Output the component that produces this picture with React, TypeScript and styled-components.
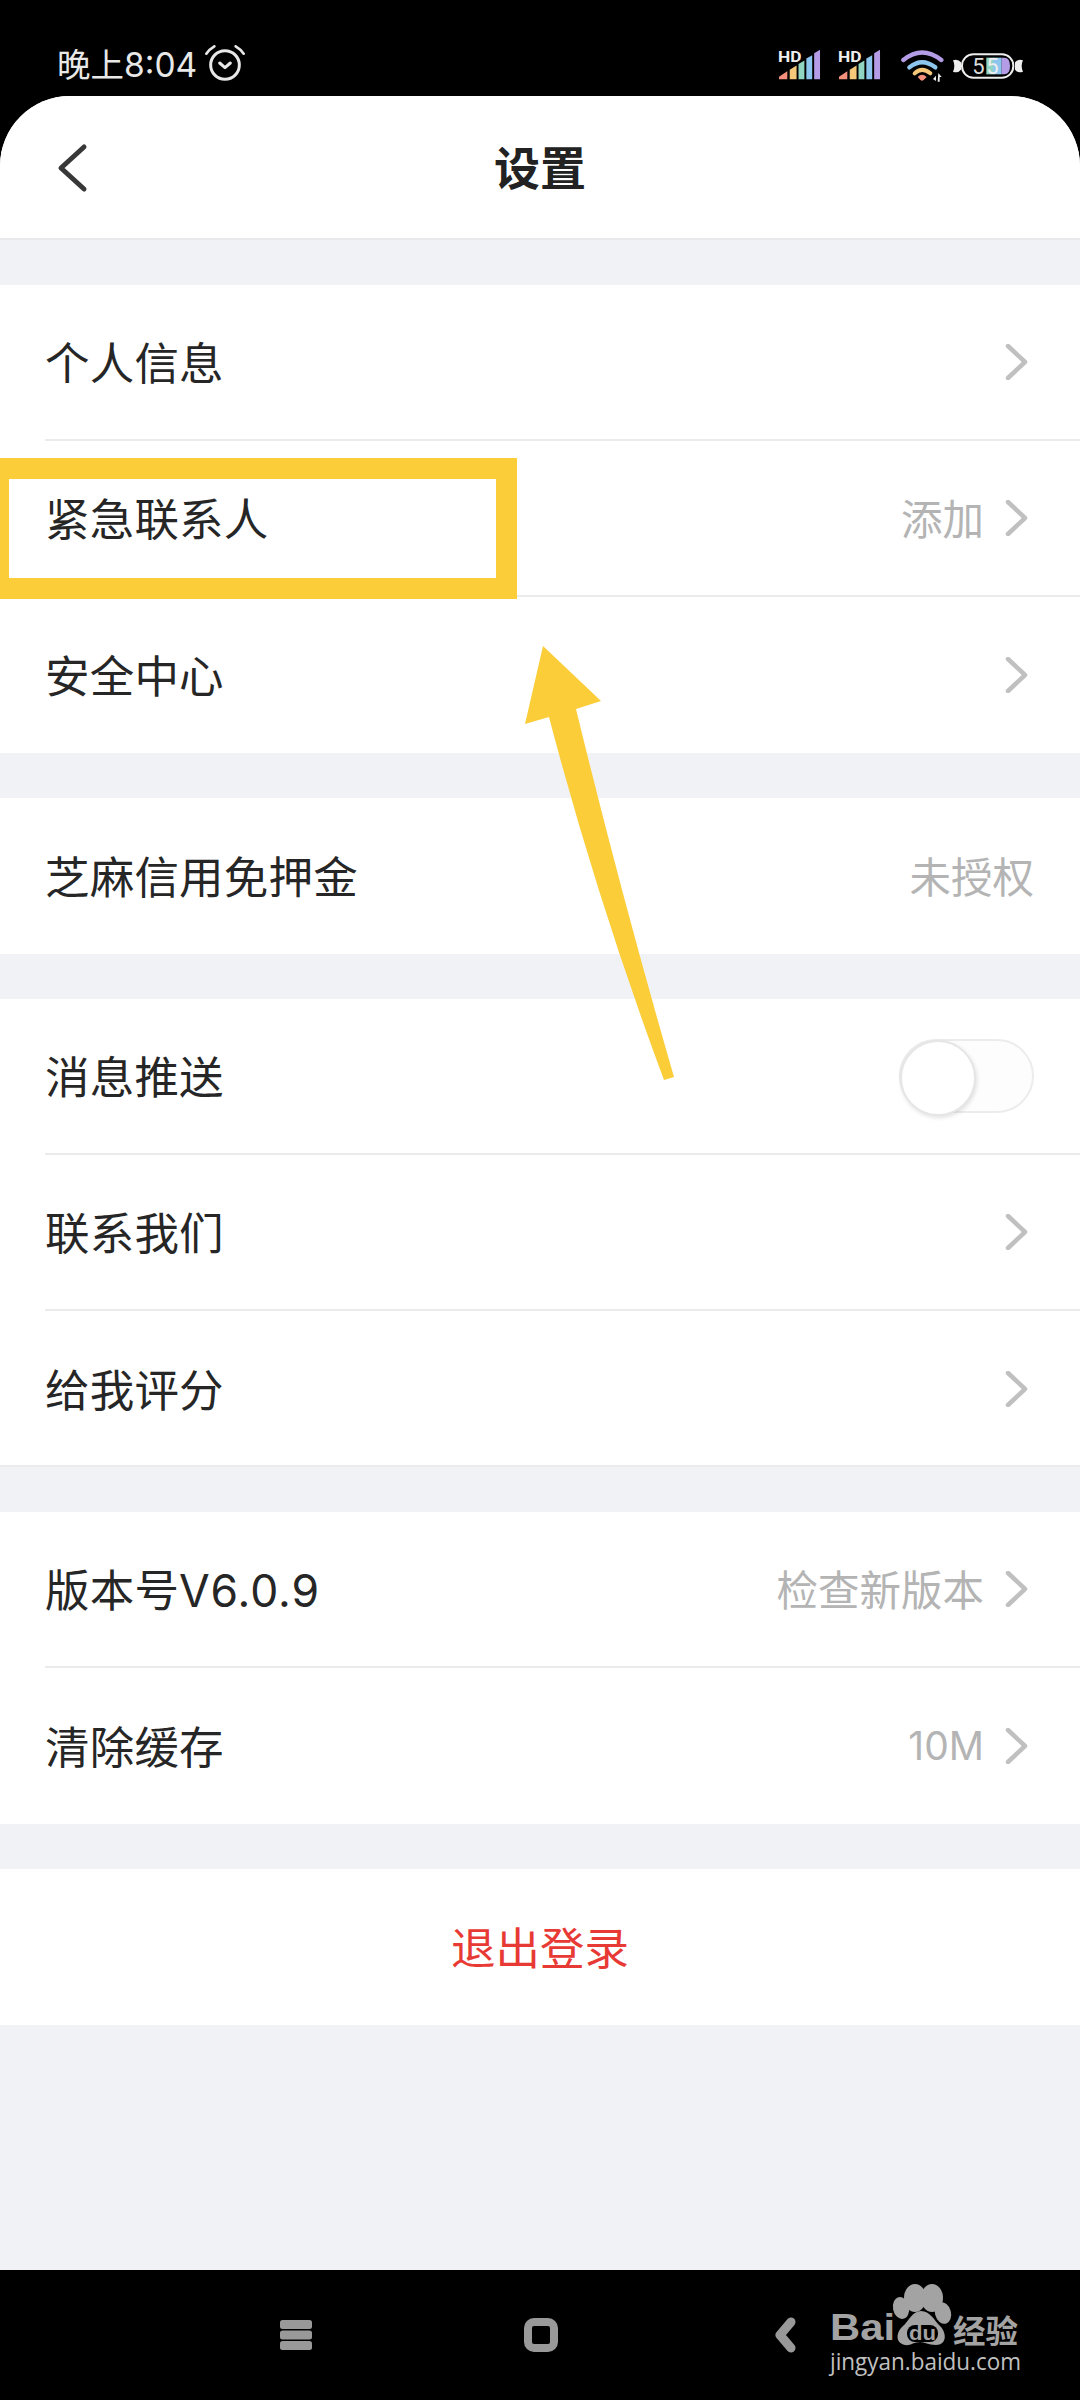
import React from "react";
import styled, { createGlobalStyle } from "styled-components";

const Global = createGlobalStyle`
  html, body { margin: 0; padding: 0; background: #000; }
  body { font-family: Inter, "Noto Sans CJK SC", sans-serif; }
`;

const Screen = styled.div`
  position: relative;
  width: 1080px;
  height: 2400px;
  background: #000;
  display: flex;
  flex-direction: column;
  overflow: hidden;
`;

const StatusBar = styled.div`
  height: 96px;
  box-sizing: border-box;
  display: flex;
  align-items: flex-start;
  justify-content: space-between;
  padding: 46px 57px 0 57px;
`;

const StatusLeft = styled.div`
  display: flex;
  align-items: flex-start;
  gap: 8px;
  margin-top: -1px;
`;

const Time = styled.span`
  color: #e8e8e8;
  font-size: 33.5px;
  line-height: 38px;
  margin-top: 1px;
`;

const StatusRight = styled.div`
  display: flex;
  align-items: flex-start;
`;

const Sheet = styled.main`
  flex: 1;
  background: #f1f2f6;
  border-radius: 70px 70px 0 0;
  overflow: hidden;
  display: flex;
  flex-direction: column;
  gap: 45px;
`;

const Header = styled.header`
  height: 144px;
  box-sizing: border-box;
  background: #fff;
  border-bottom: 2px solid #e9e9ec;
  display: grid;
  grid-template-columns: 1fr auto 1fr;
  align-items: center;
  padding: 2px 56px 0;
`;

const Title = styled.h1`
  margin: 0;
  font-size: 46px;
  font-weight: 700;
  color: #222;
  line-height: 60px;
`;

const Group = styled.section<{ $ruled?: boolean }>`
  background: #fff;
  box-shadow: ${(p) => (p.$ruled ? "inset 0 -2px 0 #ebebeb" : "none")};
`;

const Row = styled.div<{ $last?: boolean }>`
  height: 156px;
  box-sizing: border-box;
  margin-left: 45px;
  padding-right: 46px;
  display: flex;
  align-items: center;
  justify-content: space-between;
  border-bottom: ${(p) => (p.$last ? "none" : "2px solid #ebebeb")};
`;

const Label = styled.span`
  font-size: 44.5px;
  color: #262626;
  letter-spacing: 0.2px;
  margin-bottom: 3px;
`;

const LabelLatin = styled.span`
  letter-spacing: 1px;
`;

const Trailing = styled.div`
  display: flex;
  align-items: center;
  gap: 21px;
`;

const Value = styled.span<{ $latin?: boolean }>`
  font-size: ${(p) => (p.$latin ? "39px" : "41.5px")};
  color: #b4b4b4;
  margin-bottom: 2px;
`;

const ChevronIcon = styled.svg`
  width: 24px;
  height: 36px;
  margin-right: 5px;
  display: block;
`;

const Switch = styled.div`
  position: relative;
  width: 135px;
  height: 74px;
  box-sizing: border-box;
  border: 2px solid #ececec;
  border-radius: 37px;
  background: #fdfdfd;
`;

const Knob = styled.div`
  position: absolute;
  left: -1px;
  top: -1px;
  width: 76px;
  height: 76px;
  box-sizing: border-box;
  border-radius: 50%;
  background: #fff;
  border: 2px solid #e6e6e6;
  box-shadow: 1px 2px 4px rgba(0, 0, 0, 0.12);
`;

const Logout = styled.button`
  display: block;
  width: 100%;
  height: 156px;
  border: 0;
  padding: 0 0 3px;
  background: transparent;
  font: inherit;
  font-size: 44.5px;
  color: #e83a34;
`;

const NavBar = styled.nav`
  height: 130px;
  display: flex;
  align-items: center;
  gap: 211px;
  padding-left: 279px;
`;

const NavIcon = styled.svg`
  width: 34px;
  height: 36px;
  display: block;
`;

const Highlight = styled.div`
  position: absolute;
  left: 0;
  top: 458px;
  width: 517px;
  height: 141px;
  box-sizing: border-box;
  border: 21px solid #fbcd38;
  border-left-width: 9px;
`;

const Overlay = styled.svg`
  position: absolute;
  left: 0;
  top: 0;
  width: 1080px;
  height: 2400px;
  pointer-events: none;
`;

const Watermark = styled.svg`
  position: absolute;
  left: 800px;
  top: 2270px;
  width: 250px;
  height: 120px;
`;

const Signal = ({ ml }: { ml: number }) => (
  <svg width="43" height="34" viewBox="0 -3 44 34" style={{ marginLeft: ml, display: "block" }}>
    <path d="M1 30.5 L1 28 L9.5 22.5 L9.5 30.5 Z" fill="#f4907c" />
    <path d="M12 30.5 L12 21 L19 16.5 L19 30.5 Z" fill="#f5c87a" />
    <path d="M21 30.5 L21 15 L27 11.5 L27 30.5 Z" fill="#8fd5c2" />
    <path d="M29 30.5 L29 9.5 L35 6 L35 30.5 Z" fill="#8cc5ee" />
    <path d="M37 30.5 L37 4 L43 0.5 L43 30.5 Z" fill="#b59ce6" />
    <text x="0" y="12.5" fontFamily="Roboto, sans-serif" fontWeight="700" fontSize="15.5" fill="#eee" textLength="24" lengthAdjust="spacingAndGlyphs">
      HD
    </text>
  </svg>
);

const Wifi = () => (
  <svg width="46" height="33" viewBox="0 0 138 99" style={{ marginLeft: 20, marginTop: 3, display: "block" }}>
    <path d="M7 33 Q63 -12 121 33" fill="none" stroke="#b59ce6" strokeWidth="13" strokeLinecap="round" />
    <path d="M25 55 Q63 24 103 55" fill="none" stroke="#8cc5ee" strokeWidth="13" strokeLinecap="round" />
    <path d="M41 73 Q63 52 88 73" fill="none" stroke="#f5c87a" strokeWidth="12" strokeLinecap="round" />
    <path d="M50 84 Q63 70 77 84 Q63 98 63 95 Q63 98 50 84 Z" fill="#f4907c" />
    <path d="M96 90 L105 80 L105 96 Z" fill="#eee" />
    <path d="M112 72 L122 84 L116 84 L116 98 L110 98 Z" fill="#eee" />
  </svg>
);

const Battery = () => (
  <svg width="70" height="26" viewBox="0 0 210 78" style={{ marginLeft: 6, marginTop: 7, display: "block" }}>
    <path d="M0 22 Q14 16 24 28 L24 50 Q14 62 0 56 Q8 39 0 22 Z" fill="#eee" />
    <path d="M210 22 Q196 16 186 28 L186 50 Q196 62 210 56 Q202 39 210 22 Z" fill="#eee" />
    <rect x="27" y="4" width="154" height="70" rx="34" fill="#000" stroke="#eee" strokeWidth="6" />
    <rect x="100" y="14" width="22" height="50" fill="#8fd5c2" />
    <rect x="120" y="14" width="26" height="50" fill="#8cc5ee" />
    <path d="M146 14 H154 Q171 14 171 39 Q171 64 154 64 H146 Z" fill="#b59ce6" />
    <text x="58" y="62" fontFamily="Roboto, sans-serif" fontSize="66" fill="#ddd">
      5
    </text>
    <text x="100" y="62" fontFamily="Roboto, sans-serif" fontSize="66" fill="#eee">
      5
    </text>
  </svg>
);

const Alarm = () => (
  <svg width="40" height="36" viewBox="0 0 120 108" style={{ display: "block" }}>
    <circle cx="60" cy="60" r="43" fill="none" stroke="#e8e8e8" strokeWidth="9" />
    <path d="M4 26 Q14 12 28 4" fill="none" stroke="#e8e8e8" strokeWidth="8" strokeLinecap="round" />
    <path d="M116 26 Q106 12 92 4" fill="none" stroke="#e8e8e8" strokeWidth="8" strokeLinecap="round" />
    <path d="M44 54 L60 68 L76 54" fill="none" stroke="#e8e8e8" strokeWidth="9" strokeLinecap="round" strokeLinejoin="round" />
  </svg>
);

const Back = () => (
  <svg width="32" height="50" viewBox="0 0 32 50" style={{ display: "block" }}>
    <path d="M28 4 L5 25 L28 46" fill="none" stroke="#383838" strokeWidth="5" strokeLinecap="round" strokeLinejoin="round" />
  </svg>
);

const Chevron = () => (
  <ChevronIcon viewBox="0 0 24 36">
    <path d="M3 2 L20 18 L3 34" fill="none" stroke="#c0c0c0" strokeWidth="4.5" strokeLinecap="round" strokeLinejoin="round" />
  </ChevronIcon>
);

type Item = {
  label: string;
  latin?: string;
  value?: string;
  valueLatin?: boolean;
  chevron?: boolean;
  toggle?: boolean;
};

const groups: { items: Item[]; ruled?: boolean }[] = [
  {
    items: [
      { label: "个人信息", chevron: true },
      { label: "紧急联系人", value: "添加", chevron: true },
      { label: "安全中心", chevron: true },
    ],
  },
  { items: [{ label: "芝麻信用免押金", value: "未授权" }] },
  {
    ruled: true,
    items: [
      { label: "消息推送", toggle: true },
      { label: "联系我们", chevron: true },
      { label: "给我评分", chevron: true },
    ],
  },
  {
    items: [
      { label: "版本号", latin: "V6.0.9", value: "检查新版本", chevron: true },
      { label: "清除缓存", value: "10M", valueLatin: true, chevron: true },
    ],
  },
];

export default function App() {
  return (
    <Screen>
      <Global />
      <StatusBar>
        <StatusLeft>
          <Time>晚上8:04</Time>
          <Alarm />
        </StatusLeft>
        <StatusRight>
          <Signal ml={0} />
          <Signal ml={17} />
          <Wifi />
          <Battery />
        </StatusRight>
      </StatusBar>
      <Sheet>
        <Header>
          <Back />
          <Title>设置</Title>
        </Header>
        {groups.map((g, gi) => (
          <Group key={gi} $ruled={g.ruled}>
            {g.items.map((it, i) => (
              <Row key={it.label} $last={i === g.items.length - 1}>
                <Label>
                  {it.label}
                  {it.latin && <LabelLatin>{it.latin}</LabelLatin>}
                </Label>
                <Trailing>
                  {it.value && <Value $latin={it.valueLatin}>{it.value}</Value>}
                  {it.chevron && <Chevron />}
                  {it.toggle && (
                    <Switch>
                      <Knob />
                    </Switch>
                  )}
                </Trailing>
              </Row>
            ))}
          </Group>
        ))}
        <Group>
          <Logout>退出登录</Logout>
        </Group>
      </Sheet>
      <NavBar>
        <NavIcon viewBox="0 0 34 36">
          <rect x="1" y="3" width="32" height="9" rx="2.5" fill="#999" />
          <rect x="1" y="13.5" width="32" height="9" rx="2.5" fill="#999" />
          <rect x="1" y="24" width="32" height="9" rx="2.5" fill="#999" />
        </NavIcon>
        <NavIcon viewBox="0 0 34 36">
          <rect x="4" y="5" width="26" height="26" rx="6" fill="none" stroke="#999" strokeWidth="8" />
        </NavIcon>
        <NavIcon viewBox="0 0 34 36">
          <path d="M22 5 L11 18 L22 31" fill="none" stroke="#999" strokeWidth="9" strokeLinecap="round" strokeLinejoin="round" />
        </NavIcon>
      </NavBar>
      <Highlight />
      <Overlay viewBox="0 0 1080 2400">
        <path
          d="M543 646 L601 701 L576 709 Q621 894 674 1077 L664 1080 Q597 900 549 717 L525 724 Z"
          fill="#fbcd38"
        />
      </Overlay>
      <Watermark viewBox="0 0 250 120">
        <ellipse cx="115" cy="28" rx="11" ry="14" fill="#a3a3a3" />
        <ellipse cx="132" cy="28" rx="11" ry="14" fill="#a3a3a3" />
        <ellipse cx="101" cy="38" rx="8" ry="11" fill="#a3a3a3" transform="rotate(-12 101 38)" />
        <ellipse cx="143" cy="43" rx="8" ry="11" fill="#a3a3a3" transform="rotate(-15 143 43)" />
        <path
          d="M121 41 C130 41 134 50 140 56 C147 63 147 75 136 75 C128 75 125 72 120 72 C114 72 110 76 105 75 C95 73 96 62 103 56 C109 51 112 41 121 41 Z"
          fill="#a3a3a3"
        />
        <rect x="107" y="55" width="31" height="17" rx="8" fill="#000" />
        <text x="109" y="70" fontFamily="Liberation Sans, sans-serif" fontWeight="700" fontSize="20" fill="#a3a3a3" textLength="27" lengthAdjust="spacingAndGlyphs">
          du
        </text>
        <text x="30" y="70" fontFamily="Liberation Sans, sans-serif" fontWeight="700" fontSize="36" fill="#a3a3a3" textLength="65" lengthAdjust="spacingAndGlyphs">
          Bai
        </text>
        <text x="153" y="73" fontFamily="Noto Sans CJK SC, sans-serif" fontWeight="700" fontSize="32" fill="#a3a3a3" textLength="65" lengthAdjust="spacingAndGlyphs">
          经验
        </text>
        <text x="30" y="100" fontFamily="Open Sans, sans-serif" fontSize="24" fill="#c0c0c0" textLength="191" lengthAdjust="spacingAndGlyphs">
          jingyan.baidu.com
        </text>
      </Watermark>
    </Screen>
  );
}
